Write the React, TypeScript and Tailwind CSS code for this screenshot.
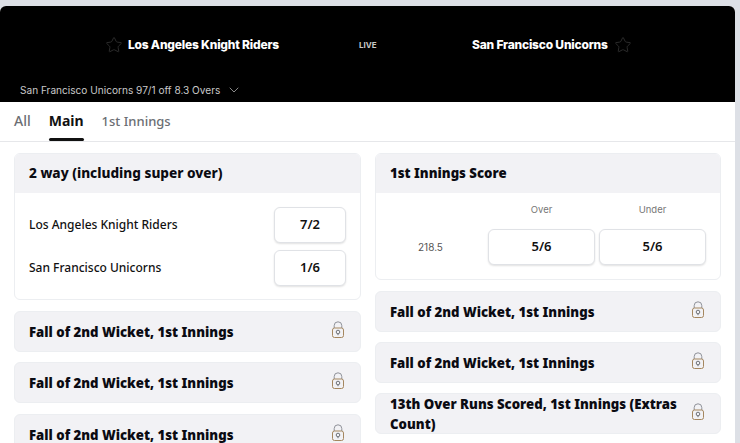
import { ChevronDown, Star } from "lucide-react";

function LockIcon() {
  return (
    <svg width="14" height="18" viewBox="0 0 14 18" fill="none" className="mb-[4px] shrink-0">
      <path d="M3.2 7V4.6a3.8 3.8 0 0 1 7.6 0V7" stroke="#8f9299" strokeWidth="1" />
      <rect x="1.5" y="7" width="11" height="9.5" rx="2" stroke="#a5875f" strokeWidth="1" />
      <circle cx="7" cy="11" r="1.8" stroke="#6f7278" strokeWidth="1" />
      <path d="M7 12.8v1.4" stroke="#6f7278" strokeWidth="1" />
    </svg>
  );
}

function LockedMarket({ title, className }: { title: string; className?: string }) {
  return (
    <div
      className={`flex h-[41px] shrink-0 items-center justify-between gap-[8px] rounded-md border border-[#eceef1] bg-[#f2f2f5] pl-[14px] pr-[15px] ${className ?? ""}`}
    >
      <span className="text-[13.2px] leading-[20px] font-black text-[#0b0b12]">{title}</span>
      <LockIcon />
    </div>
  );
}

function OddsButton({ value, className }: { value: string; className: string }) {
  return (
    <button
      className={`rounded-md border border-[#e0e2e6] bg-white text-[13px] font-semibold text-[#111] shadow-[0_1px_2px_rgba(0,0,0,0.12)] ${className}`}
    >
      {value}
    </button>
  );
}

export default function App() {
  return (
    <div className="h-[443px] w-[740px] overflow-hidden bg-[#dde0e6] pt-[6px] pr-[5px] font-['Noto_Sans',sans-serif]">
      <div className="h-[437px] overflow-hidden rounded-t-md bg-white">
        {/* Match header */}
        <div className="flex h-[96px] flex-col bg-black font-['Inter',sans-serif] text-white">
          <div className="flex h-[76px] items-start pt-[30px]">
            <div className="flex w-[279px] items-center justify-end gap-[5px]">
              <Star size={18} strokeWidth={1} className="text-[#3a3a3a]" />
              <span className="text-[12px] leading-[18px] font-extrabold tracking-[-0.2px]">Los Angeles Knight Riders</span>
            </div>
            <div className="w-[193px] pl-[80px] pt-[3px] text-[8px] leading-[12px] font-bold text-[#c8c8c8]">LIVE</div>
            <div className="flex items-center gap-[6px]">
              <span className="text-[12px] leading-[18px] font-extrabold tracking-[-0.2px]">San Francisco Unicorns</span>
              <Star size={18} strokeWidth={1} className="text-[#3a3a3a]" />
            </div>
          </div>
          <div className="flex items-center gap-[6px] pl-[20px] text-[10.1px] leading-[14px] text-[#c9c9c9]">
            <span>San Francisco Unicorns 97/1 off 8.3 Overs</span>
            <ChevronDown size={16} strokeWidth={1} className="text-[#cfcfcf]" />
          </div>
        </div>

        {/* Tabs */}
        <div className="flex h-[40px] gap-[18px] border-b border-[#e6e7ea] pl-[14px] text-[14px] leading-[38px]">
          <span className="font-medium text-[#6b6e73]">All</span>
          <span className="relative font-bold text-[#111]">
            Main
            <span className="absolute right-0 bottom-0 left-0 h-[3px] rounded-sm bg-[#111]" />
          </span>
          <span className="text-[13px] font-medium text-[#6b6e73]">1st Innings</span>
        </div>

        {/* Markets */}
        <div className="flex gap-[14px] px-[14px] pt-[11px]">
          <div className="flex w-[347px] shrink-0 flex-col">
            <div className="h-[147px] overflow-hidden rounded-md border border-[#eceef1] bg-white">
              <div className="flex h-[39px] items-center bg-[#f2f2f5] pl-[14px] text-[13.6px] font-extrabold text-[#0b0b12]">
                2 way (including super over)
              </div>
              <div className="flex flex-col gap-[7px] pt-[14px] pr-[14px] pl-[14px]">
                <div className="flex items-center justify-between">
                  <span className="text-[12px] font-medium text-[#111]">Los Angeles Knight Riders</span>
                  <OddsButton value="7/2" className="h-[36px] w-[72px]" />
                </div>
                <div className="flex items-center justify-between">
                  <span className="text-[12px] font-medium text-[#111]">San Francisco Unicorns</span>
                  <OddsButton value="1/6" className="h-[36px] w-[72px]" />
                </div>
              </div>
            </div>
            <LockedMarket title="Fall of 2nd Wicket, 1st Innings" className="mt-[11px]" />
            <LockedMarket title="Fall of 2nd Wicket, 1st Innings" className="mt-[10px]" />
            <LockedMarket title="Fall of 2nd Wicket, 1st Innings" className="mt-[11px]" />
          </div>

          <div className="flex w-[346px] shrink-0 flex-col">
            <div className="h-[127px] overflow-hidden rounded-md border border-[#eceef1] bg-white">
              <div className="flex h-[39px] items-center bg-[#f2f2f5] pl-[14px] text-[13.2px] font-black text-[#0b0b12]">
                1st Innings Score
              </div>
              <div className="flex pt-[10px] pl-[42px] font-['Inter',sans-serif] text-[9.5px] leading-[14px] text-[#777]">
                <span className="ml-[70px] w-[107px] text-center">Over</span>
                <span className="ml-[4px] w-[107px] text-center">Under</span>
              </div>
              <div className="flex items-center pt-[12px]">
                <span className="w-[112px] pl-[42px] font-['Inter',sans-serif] text-[10px] text-[#555]">218.5</span>
                <OddsButton value="5/6" className="h-[36px] w-[107px]" />
                <OddsButton value="5/6" className="ml-[4px] h-[36px] w-[107px]" />
              </div>
            </div>
            <LockedMarket title="Fall of 2nd Wicket, 1st Innings" className="mt-[11px]" />
            <LockedMarket title="Fall of 2nd Wicket, 1st Innings" className="mt-[10px]" />
            <LockedMarket title="13th Over Runs Scored, 1st Innings (Extras Count)" className="mt-[10px]" />
          </div>
        </div>
      </div>
    </div>
  );
}
